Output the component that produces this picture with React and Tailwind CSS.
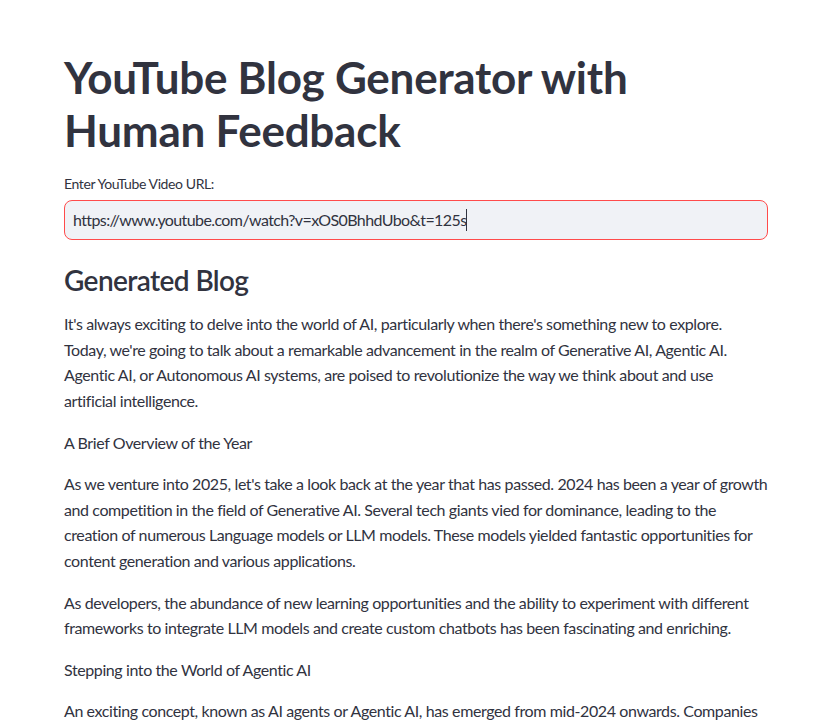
import React from 'react';

const font = { fontFamily: 'Lato, "Noto Sans", sans-serif' };

const Para = ({ lines }) => (
  <p className="mb-4 text-[16px] leading-[25.6px] tracking-[-0.4px] text-[#31333f]">
    {lines.map((l, i) => (
      <span key={i} className="block whitespace-nowrap">{l}</span>
    ))}
  </p>
);

export default function App() {
  return (
    <div className="min-h-screen bg-white overflow-hidden" style={font}>
      <div className="w-[704px] ml-[64px] pt-[51px]">
        <h1 className="text-[44px] leading-[52.8px] font-bold tracking-[-0.25px] text-[#31333f]">
          YouTube Blog Generator with
          <br />
          Human Feedback
        </h1>

        <label className="block mt-[16px] mb-[6px] text-[14px] leading-[21px] tracking-[-0.4px] text-[#31333f]">
          Enter YouTube Video URL:
        </label>
        <div className="h-[40px] rounded-lg border border-[#ff4b4b] bg-[#f0f2f6] flex items-center px-[8px]">
          <span className="text-[16px] tracking-[-0.6px] text-[#31333f]">
            https://www.youtube.com/watch?v=xOS0BhhdUbo&amp;t=125s
          </span>
          <span className="inline-block w-px h-[22px] bg-[#31333f]" />
        </div>

        <h3 className="mt-[24px] mb-[14px] text-[28px] leading-[33.6px] font-semibold tracking-[-0.6px] text-[#31333f]">
          Generated Blog
        </h3>

        <Para
          lines={[
            "It's always exciting to delve into the world of AI, particularly when there's something new to explore.",
            "Today, we're going to talk about a remarkable advancement in the realm of Generative AI, Agentic AI.",
            'Agentic AI, or Autonomous AI systems, are poised to revolutionize the way we think about and use',
            'artificial intelligence.',
          ]}
        />
        <Para lines={['A Brief Overview of the Year']} />
        <Para
          lines={[
            "As we venture into 2025, let's take a look back at the year that has passed. 2024 has been a year of growth",
            'and competition in the field of Generative AI. Several tech giants vied for dominance, leading to the',
            'creation of numerous Language models or LLM models. These models yielded fantastic opportunities for',
            'content generation and various applications.',
          ]}
        />
        <Para
          lines={[
            'As developers, the abundance of new learning opportunities and the ability to experiment with different',
            'frameworks to integrate LLM models and create custom chatbots has been fascinating and enriching.',
          ]}
        />
        <Para lines={['Stepping into the World of Agentic AI']} />
        <Para
          lines={[
            'An exciting concept, known as AI agents or Agentic AI, has emerged from mid-2024 onwards. Companies',
          ]}
        />
      </div>
    </div>
  );
}
